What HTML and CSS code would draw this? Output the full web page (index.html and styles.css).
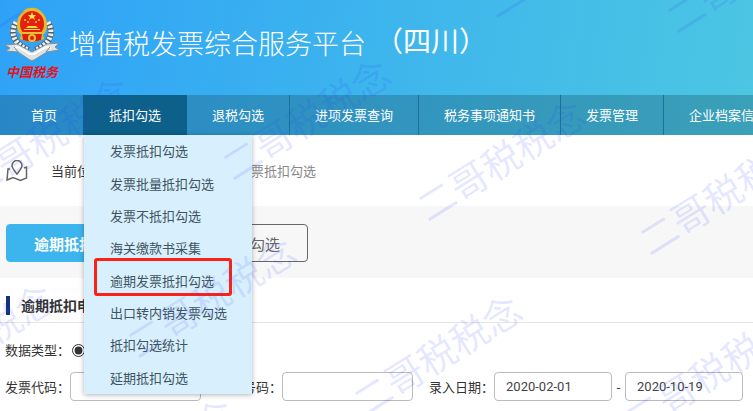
FILE: index.html
```html
<!DOCTYPE html>
<html lang="zh-CN">
<head>
    <meta charset="UTF-8">
    <meta name="viewport" content="width=device-width, initial-scale=1.0">
    <title>增值税发票综合服务平台</title>
    <link rel="stylesheet" href="styles.css">
</head>
<body>
    <header class="header">
        <div class="brand">
            <svg class="logo" viewBox="0 0 60 80" width="60" height="80" role="img" aria-label="中国税务">
                <!-- wheat wreath -->
                <g fill="none" stroke="#4d6270" stroke-width="6">
                    <path d="M14 19C7 31 13 42 27 47"/>
                    <path d="M46 19C53 31 47 42 33 47"/>
                </g>
                <g fill="none" stroke="#eef0ee" stroke-width="5" stroke-dasharray="2.5 1.5">
                    <path d="M14 19C7 31 13 42 27 47"/>
                    <path d="M46 19C53 31 47 42 33 47"/>
                </g>
                <path d="M15 22a14 16 0 0 1 30 0q0 7-4 10l1 4q-12 6-24 0l1-4q-4-3-4-10z" fill="#e9b92c"/>
                <ellipse cx="30" cy="21" rx="12" ry="13" fill="#e5200f"/>
                <path d="M30 9l1 3h3l-2 2 1 3-3-2-3 2 1-3-2-2h3z" fill="#ffe14a"/>
                <g fill="#ffd83a">
                    <circle cx="23" cy="17" r="1"/><circle cx="26" cy="19" r="1"/>
                    <circle cx="34" cy="19" r="1"/><circle cx="37" cy="17" r="1"/>
                    <path d="M26 23h8l2 2H24zM22 26h16v1H22z"/>
                </g>
                <path d="M20 31h20l-1 6q-9 3-18 0z" fill="#d8200f"/>
                <path d="M20 30h20" stroke="#edbc31" stroke-width="2"/>
                <circle cx="30" cy="35" r="4" fill="#edbc31"/>
                <circle cx="30" cy="35" r="2" fill="#c7231a"/>
                <!-- ribbon -->
                <path d="M3 42l12-1 15 8 15-8 12-1-4 4 4 3-12 2-13 8q-2 1-4 0l-12-8-12-1 4-3z" fill="#dfe2e2" stroke="#7e909b" stroke-width="1"/>
                <path d="M12 45l4-1 12 7h4l12-7 5 1" fill="none" stroke="#fff" stroke-width="2"/>
                <path d="M16 49l-4-5M44 49l4-5" stroke="#77818a"/>
                <text class="logo-text" x="4" y="74">中国税务</text>
            </svg>
            <h1 class="title">增值税发票综合服务平台</h1>
            <span class="region">（四川）</span>
        </div>
        <nav class="nav">
            <a href="#">首页</a>
            <div class="nav-item">
                <a class="active" href="#">抵扣勾选</a>
                <ul class="menu">
                    <li><a href="#">发票抵扣勾选</a></li>
                    <li><a href="#">发票批量抵扣勾选</a></li>
                    <li><a href="#">发票不抵扣勾选</a></li>
                    <li><a href="#">海关缴款书采集</a></li>
                    <li class="marked"><a href="#">逾期发票抵扣勾选</a></li>
                    <li><a href="#">出口转内销发票勾选</a></li>
                    <li><a href="#">抵扣勾选统计</a></li>
                    <li><a href="#">延期抵扣勾选</a></li>
                </ul>
            </div>
            <a href="#">退税勾选</a>
            <a href="#">进项发票查询</a>
            <a href="#">税务事项通知书</a>
            <a href="#">发票管理</a>
            <a href="#">企业档案信息</a>
        </nav>
    </header>
    <main>
        <div class="crumbs">
            <svg width="22" height="22" viewBox="0 0 22 22" fill="none" stroke="#666" stroke-width="1.5" aria-hidden="true">
                <path d="M11 14C8 10 6 8 6 5.500a5 5 0 0 1 10 0C16 8 14 10 11 14z"/>
                <path d="M4 9H2L1 20l6-2.500 7.500 3 6-2.500V7L18 8"/>
            </svg>
            <span class="crumb-label">当前位置：</span>
            <a href="#">抵扣勾选</a>
            <span class="arrow">&gt;</span>
            <span>逾期发票抵扣勾选</span>
        </div>
        <div class="tabs">
            <button class="tab on" type="button">逾期抵扣申请</button>
            <button class="tab" type="button">逾期抵扣勾选</button>
        </div>
        <h2 class="section-title">逾期抵扣申请</h2>
        <form class="filters">
            <div class="row">
                <span>数据类型：</span>
                <input type="radio" id="special" name="kind" checked>
                <label for="special">增值税发票</label>
            </div>
            <div class="row">
                <div class="field">
                    <label for="code">发票代码：</label>
                    <input class="box wide" type="text" id="code">
                </div>
                <div class="field">
                    <label for="number">发票号码：</label>
                    <input class="box wide" type="text" id="number">
                </div>
                <div class="field">
                    <label for="from">录入日期：</label>
                    <input class="box" type="text" id="from" value="2020-02-01">
                    <span class="dash">-</span>
                    <input class="box" type="text" id="to" value="2020-10-19" aria-label="录入日期止">
                </div>
            </div>
        </form>
    </main>
    <!-- watermark over the whole page -->
    <svg class="watermark" aria-hidden="true">
        <text transform="translate(-5 32) rotate(-32)">二</text>
        <text transform="translate(496 20) rotate(-32)">二</text>
        <text transform="translate(677 35) rotate(-32)">二哥</text>
        <text transform="translate(-26 200) rotate(-32)">二哥税税念</text>
        <text transform="translate(233 182) rotate(-32)">二哥税税念</text>
        <text transform="translate(428 223) rotate(-32)">二哥税税念</text>
        <text transform="translate(650 257) rotate(-32)">二哥税税念</text>
        <text transform="translate(-103 407) rotate(-32)">二哥税税念</text>
        <text transform="translate(138 360) rotate(-32)">二哥税税念</text>
        <text transform="translate(364 418) rotate(-32)">二哥税税念</text>
        <text transform="translate(636 436) rotate(-32)">二哥税税念</text>
        <text transform="translate(78 522) rotate(-32)">二哥税税念</text>
    </svg>
</body>
</html>
```
FILE: styles.css
```css
/* General styling */
*, *::before, *::after {
    box-sizing: border-box;
}
body {
    position: relative;
    margin: 0;
    min-height: 100vh;
    font-family: "Noto Sans CJK SC", sans-serif;
    font-size: 13px;
    line-height: 20px;
    color: #333;
    background: #fff;
}
a {
    color: inherit;
    text-decoration: none;
}
/* Header */
.header {
    background: linear-gradient(100deg, #2fa2f8, #3db5ed 50%, #4cc6e2);
    color: #fff;
}
.brand {
    display: flex;
    align-items: center;
    height: 95px;
    padding-left: 2px;
    white-space: nowrap;
}
.logo {
    flex: none;
    margin-right: 7px;
    margin-bottom: 10px;
}
.logo-text {
    font-family: "Noto Sans CJK SC", sans-serif;
    font-size: 13px;
    font-weight: bold;
    font-style: italic;
    fill: #e0141c;
}
.title {
    margin: 0;
    padding-bottom: 10px;
    font-size: 27px;
    line-height: 32px;
    font-weight: 300;
}
.region {
    margin-left: 9px;
    padding-bottom: 16px;
    font-size: 28px;
    line-height: 32px;
}
/* Main navigation */
.nav {
    display: flex;
    height: 40px;
    padding-left: 6px;
    overflow-x: clip;
    background: rgba(20, 73, 87, 0.3);
    line-height: 40px;
    white-space: nowrap;
}
.nav > a, .nav-item > a {
    flex: none;
    display: block;
    padding: 0 25px;
    border-right: 1px solid #1b719c;
}
.nav > a:first-child {
    border-right-color: transparent;
}
.nav-item {
    position: relative;
    flex: none;
}
.nav-item > .active {
    padding: 0 26px;
    background: #0c6089;
    border-right: 0;
}
.menu {
    position: absolute;
    z-index: 2;
    top: 40px;
    left: 1px;
    display: grid;
    grid-auto-rows: 1fr;
    width: 168px;
    height: 259px;
    margin: 0;
    padding: 0;
    list-style: none;
    background: #d8f0fd;
    color: #3f5360;
    box-shadow: 0 1px 5px rgba(0, 0, 0, 0.3);
}
.menu li {
    position: relative;
    display: flex;
    align-items: center;
    padding-left: 26px;
    line-height: 20px;
}
.marked::after {
    content: "";
    position: absolute;
    top: -7px;
    left: 10px;
    width: 138px;
    height: 38px;
    border: 3px solid #fb2114;
    border-radius: 3px;
}
/* Breadcrumbs */
.crumbs {
    display: flex;
    align-items: center;
    height: 71px;
    padding-left: 6px;
    color: #888;
}
.crumb-label {
    margin-left: 23px;
    color: #333;
}
.arrow {
    width: 44px;
    text-align: center;
}
/* Tabs */
.tabs {
    display: flex;
    gap: 10px;
    padding: 18px 6px 16px;
    background: #f7f7f7;
}
.tab {
    height: 38px;
    padding: 0 27px;
    border: 1px solid #666;
    border-radius: 4px;
    background: transparent;
    font-family: inherit;
    font-size: 15px;
    color: #666;
}
.tab.on {
    border-color: #3cb5ee;
    background: #3cb5ee;
    font-weight: bold;
    color: #fff;
}
.section-title {
    display: flex;
    align-items: center;
    height: 45px;
    margin: 0;
    padding: 10px 6px 0;
    border-bottom: 1px solid #e6e6e6;
    font-size: 14px;
}
.section-title::before {
    content: "";
    width: 4px;
    height: 19px;
    margin-right: 11px;
    background: #15317e;
}
/* Filter form */
.filters {
    display: flex;
    flex-direction: column;
    gap: 12px;
    padding: 17px 5px 10px;
}
.row {
    display: flex;
    align-items: center;
    white-space: nowrap;
}
.row input[type=radio] {
    margin: 0 3px 0 2px;
    accent-color: #333;
}
.row .field + .field {
    margin-left: 16px;
}
.field {
    display: flex;
    align-items: center;
}
.box {
    width: 118px;
    height: 29px;
    padding: 0 11px;
    border: 1px solid #bbb;
    border-radius: 4px;
    background: #fff;
    font-family: Roboto, sans-serif;
    font-size: 13px;
    color: #444;
}
.box.wide {
    width: 131px;
}
.dash {
    width: 13px;
    text-align: center;
}
/* Watermark */
.watermark {
    position: absolute;
    z-index: 3;
    top: 0;
    left: 0;
    width: 100%;
    height: 100%;
    overflow: hidden;
    pointer-events: none;
    font-size: 38px;
    fill: rgba(45, 65, 255, 0.13);
}
```
